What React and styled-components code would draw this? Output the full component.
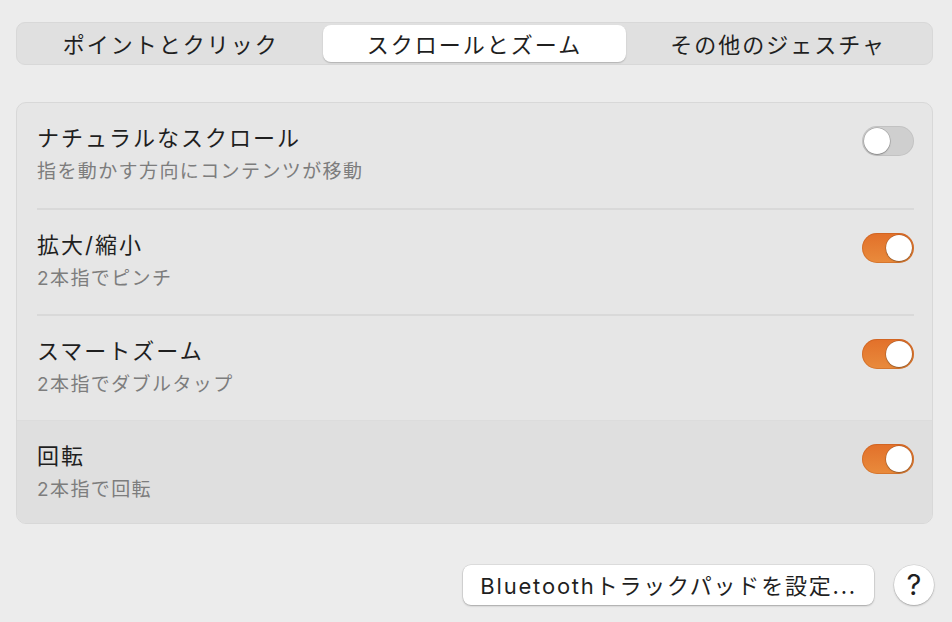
import styled, { createGlobalStyle } from "styled-components";

const GlobalStyle = createGlobalStyle`
    html, body {
        margin: 0;
        padding: 0;
        background: #ececec;
    }
    body {
        font-family: "Inter", "Noto Sans CJK JP", sans-serif;
        color: #1f1f1f;
    }
`

const StyledPage = styled.div`
    width: 952px;
    height: 622px;
    box-sizing: border-box;
    padding: 22px 19px 0 16px;
    display: flex;
    flex-direction: column;
`

const StyledSegmented = styled.div`
    display: grid;
    grid-template-columns: repeat(3, 1fr);
    height: 43px;
    box-sizing: border-box;
    padding: 2px;
    background: #e0e0e0;
    border: 1px solid #d8d8d8;
    border-radius: 9px;
`

const StyledTab = styled.div`
    display: flex;
    align-items: center;
    justify-content: center;
    padding-bottom: 2px;
    font-size: 22px;
    letter-spacing: 2px;
    color: #1f1f1f;
    border-radius: 8px;
    background: ${props => props.active ? "#ffffff" : "transparent"};
    box-shadow: ${props => props.active ? "0 1px 1.5px rgba(0,0,0,0.22)" : "none"};
`

const StyledPanel = styled.div`
    margin-top: 37px;
    background: #e6e6e6;
    border: 1px solid #d8d8d8;
    border-radius: 10px;
    overflow: hidden;
`

const StyledRow = styled.div`
    background: ${props => props.highlight ? "#dfdfdf" : "transparent"};
    border-top: ${props => props.highlight ? "1px solid #dcdcdc" : "none"};
    padding: 0 18px 0 20px;
`

const StyledRowInner = styled.div`
    display: flex;
    justify-content: space-between;
    align-items: flex-start;
    height: ${props => props.h}px;
    box-sizing: border-box;
    padding-top: 20px;
    border-top: ${props => props.divider ? "2px solid #d9d9d9" : "none"};
`

const StyledTexts = styled.div`
    display: flex;
    flex-direction: column;
`

const StyledTitle = styled.div`
    font-size: 22px;
    line-height: 30px;
    letter-spacing: 2px;
    color: #1f1f1f;
`

const StyledSubtitle = styled.div`
    margin-top: 6px;
    font-size: 19px;
    line-height: 26px;
    letter-spacing: 1.4px;
    color: #7d7d7d;
`

const StyledToggle = styled.div`
    margin-top: 3px;
    width: 52px;
    height: 30px;
    box-sizing: border-box;
    border-radius: 15px;
    padding: 2px;
    display: flex;
    justify-content: ${props => props.on ? "flex-end" : "flex-start"};
    background: ${props => props.on
        ? "linear-gradient(to bottom, #e2702a, #e98b3c)"
        : "#cfcfcf"};
    box-shadow: inset 0 0 0 1px ${props => props.on ? "rgba(180,80,20,0.35)" : "rgba(0,0,0,0.06)"};
`

const StyledKnob = styled.div`
    width: 26px;
    height: 26px;
    border-radius: 50%;
    background: #ffffff;
    box-shadow: 0 0 0 0.5px rgba(0,0,0,0.25), 0 1px 1.5px rgba(0,0,0,0.25);
`

const StyledFooter = styled.div`
    margin-top: 41px;
    margin-right: -1px;
    display: flex;
    justify-content: flex-end;
    align-items: center;
    gap: 20px;
`

const StyledButton = styled.button`
    height: 40px;
    padding: 0 17px 2px;
    border: none;
    border-radius: 8px;
    background: #ffffff;
    box-shadow: 0 0 0 0.5px rgba(0,0,0,0.12), 0 1px 2px rgba(0,0,0,0.25);
    font-family: "Inter", "Noto Sans CJK JP", sans-serif;
    font-size: 22px;
    letter-spacing: 1.8px;
    color: #1f1f1f;
`

const StyledHelp = styled.button`
    width: 40px;
    height: 40px;
    padding: 0 0 2px;
    border: none;
    border-radius: 50%;
    background: #ffffff;
    box-shadow: 0 0 0 0.5px rgba(0,0,0,0.12), 0 1px 2px rgba(0,0,0,0.25);
    font-family: "Inter", sans-serif;
    font-size: 29px;
    font-weight: 400;
    color: #1f1f1f;
    display: flex;
    align-items: center;
    justify-content: center;
`

const tabs = ["ポイントとクリック", "スクロールとズーム", "その他のジェスチャ"];

const rows = [
    { title: "ナチュラルなスクロール", desc: "指を動かす方向にコンテンツが移動", on: false, h: 105 },
    { title: "拡大/縮小", desc: "2本指でピンチ", on: true, h: 106 },
    { title: "スマートズーム", desc: "2本指でダブルタップ", on: true, h: 106 },
    { title: "回転", desc: "2本指で回転", on: true, h: 102, highlight: true },
];

function App() {
    return (
        <StyledPage>
            <GlobalStyle />
            <StyledSegmented>
                {tabs.map((t, i) => (
                    <StyledTab key={t} active={i === 1}>{t}</StyledTab>
                ))}
            </StyledSegmented>
            <StyledPanel>
                {rows.map((r, i) => (
                    <StyledRow key={r.title} highlight={r.highlight}>
                        <StyledRowInner h={r.h} divider={i > 0 && !r.highlight}>
                            <StyledTexts>
                                <StyledTitle>{r.title}</StyledTitle>
                                <StyledSubtitle>{r.desc}</StyledSubtitle>
                            </StyledTexts>
                            <StyledToggle on={r.on}><StyledKnob /></StyledToggle>
                        </StyledRowInner>
                    </StyledRow>
                ))}
            </StyledPanel>
            <StyledFooter>
                <StyledButton>Bluetoothトラックパッドを設定...</StyledButton>
                <StyledHelp>?</StyledHelp>
            </StyledFooter>
        </StyledPage>
    )
}

export default App
